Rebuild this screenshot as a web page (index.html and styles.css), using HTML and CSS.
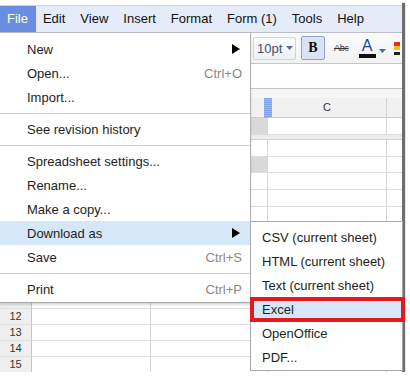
FILE: index.html
```html
<!DOCTYPE html>
<html lang="en">
<head>
    <meta charset="UTF-8">
    <title>Download as Excel</title>
    <link rel="stylesheet" href="styles.css">
</head>
<body>

    <!-- Screenshot frame -->
    <div class="shot">

        <!-- Menu bar -->
        <div class="menubar">
            <span class="menubar-item active">File</span>
            <span class="menubar-item">Edit</span>
            <span class="menubar-item">View</span>
            <span class="menubar-item">Insert</span>
            <span class="menubar-item">Format</span>
            <span class="menubar-item">Form (1)</span>
            <span class="menubar-item">Tools</span>
            <span class="menubar-item">Help</span>
        </div>

        <!-- Toolbar -->
        <div class="toolbar">
            <div class="tool font-size">
                10pt
                <svg width="7" height="4" viewBox="0 0 7 4"><path d="M0 0h7L3.5 4z" fill="#5a6d91"/></svg>
            </div>
            <div class="tool bold">B</div>
            <div class="tool abc">Abc</div>
            <div class="tool text-color">
                <span class="letter">A</span>
                <svg width="7" height="4" viewBox="0 0 7 4"><path d="M0 0h7L3.5 4z" fill="#4a6aa8"/></svg>
            </div>
            <div class="tool fill-color">
                <svg width="6" height="16" viewBox="0 0 6 16">
                    <rect x="0" y="2" width="6" height="4" fill="#e03020"/>
                    <rect x="0" y="6" width="6" height="4" fill="#f0c020"/>
                    <rect x="0" y="12" width="6" height="3" fill="#222"/>
                </svg>
            </div>
        </div>

        <!-- Formula bar -->
        <div class="formula"></div>
        <div class="gap"></div>

        <!-- Sheet grid -->
        <div class="sheet">
            <div class="row head">
                <div class="cell rh"></div>
                <div class="cell col-a"></div>
                <div class="cell col-b"><span class="resize"></span></div>
                <div class="cell col-c">C</div>
                <div class="cell col-d"></div>
            </div>
            <div class="row h17">
                <div class="cell rh">1</div>
                <div class="cell col-a"></div>
                <div class="cell col-b shaded"></div>
                <div class="cell col-c"></div>
                <div class="cell col-d"></div>
            </div>
            <div class="freeze"></div>
            <div class="row h17"><div class="cell rh">2</div><div class="cell col-a"></div><div class="cell col-b"></div><div class="cell col-c"></div><div class="cell col-d"></div></div>
            <div class="row h16"><div class="cell rh">3</div><div class="cell col-a"></div><div class="cell col-b shaded"></div><div class="cell col-c"></div><div class="cell col-d"></div></div>
            <div class="row h17"><div class="cell rh">4</div><div class="cell col-a"></div><div class="cell col-b"></div><div class="cell col-c"></div><div class="cell col-d"></div></div>
            <div class="row h17"><div class="cell rh">5</div><div class="cell col-a"></div><div class="cell col-b"></div><div class="cell col-c"></div><div class="cell col-d"></div></div>
            <div class="row h17"><div class="cell rh">6</div><div class="cell col-a"></div><div class="cell col-b"></div><div class="cell col-c"></div><div class="cell col-d"></div></div>
            <div class="row h17"><div class="cell rh">7</div><div class="cell col-a"></div><div class="cell col-b"></div><div class="cell col-c"></div><div class="cell col-d"></div></div>
            <div class="row h17"><div class="cell rh">8</div><div class="cell col-a"></div><div class="cell col-b"></div><div class="cell col-c"></div><div class="cell col-d"></div></div>
            <div class="row h17"><div class="cell rh">9</div><div class="cell col-a"></div><div class="cell col-b"></div><div class="cell col-c"></div><div class="cell col-d"></div></div>
            <div class="row h17"><div class="cell rh">10</div><div class="cell col-a"></div><div class="cell col-b"></div><div class="cell col-c"></div><div class="cell col-d"></div></div>
            <div class="row h17"><div class="cell rh">11</div><div class="cell col-a"></div><div class="cell col-b"></div><div class="cell col-c"></div><div class="cell col-d"></div></div>
            <div class="row h16"><div class="cell rh">12</div><div class="cell col-a"></div><div class="cell col-b"></div><div class="cell col-c"></div><div class="cell col-d"></div></div>
            <div class="row h16"><div class="cell rh">13</div><div class="cell col-a"></div><div class="cell col-b"></div><div class="cell col-c"></div><div class="cell col-d"></div></div>
            <div class="row h16"><div class="cell rh">14</div><div class="cell col-a"></div><div class="cell col-b"></div><div class="cell col-c"></div><div class="cell col-d"></div></div>
            <div class="row h16 last"><div class="cell rh">15</div><div class="cell col-a"></div><div class="cell col-b"></div><div class="cell col-c"></div><div class="cell col-d"></div></div>
        </div>

        <!-- File menu -->
        <div class="menu file-menu">
            <div class="menu-item">New <svg class="arrow" width="8" height="10" viewBox="0 0 8 10"><path d="M0 0l8 5-8 5z" fill="#000"/></svg></div>
            <div class="menu-item">Open... <span class="shortcut">Ctrl+O</span></div>
            <div class="menu-item">Import...</div>
            <div class="separator"></div>
            <div class="menu-item">See revision history</div>
            <div class="separator"></div>
            <div class="menu-item">Spreadsheet settings...</div>
            <div class="menu-item">Rename...</div>
            <div class="menu-item">Make a copy...</div>
            <div class="menu-item selected">Download as <svg class="arrow" width="8" height="10" viewBox="0 0 8 10"><path d="M0 0l8 5-8 5z" fill="#000"/></svg></div>
            <div class="menu-item">Save <span class="shortcut">Ctrl+S</span></div>
            <div class="separator"></div>
            <div class="menu-item">Print <span class="shortcut">Ctrl+P</span></div>
        </div>

        <!-- Download as submenu -->
        <div class="menu sub-menu">
            <div class="menu-item">CSV (current sheet)</div>
            <div class="menu-item">HTML (current sheet)</div>
            <div class="menu-item">Text (current sheet)</div>
            <div class="menu-item selected excel">Excel</div>
            <div class="menu-item">OpenOffice</div>
            <div class="menu-item">PDF...</div>
        </div>
    </div>

</body>
</html>
```

FILE: styles.css
```css
/* General Styles */
body {
    margin: 0;
    background-color: #ffffff;
    font-family: "Liberation Sans", Arial, sans-serif;
    font-size: 13px;
    color: #222;
}

.shot {
    position: relative;
    width: 402px;
    height: 372px;
    padding-top: 5px;
    box-sizing: border-box;
    background-color: #ffffff;
    box-shadow: 3px 3px 1px #6e6e6e;
}

/* Menu bar */
.menubar {
    display: flex;
    height: 26px;
    background-color: #e5ebf9;
    border-top: 1px solid #c8d5f1;
    border-bottom: 1px solid #b8bcc6;
}

.menubar-item {
    padding: 0 8px 0 7px;
    line-height: 26px;
    color: #111;
}

.menubar-item.active {
    background-color: #6a8edf;
    color: #ffffff;
}

/* Toolbar */
.toolbar {
    display: flex;
    align-items: center;
    height: 30px;
    padding-left: 253px;
    background: linear-gradient(#fbfbfb, #f2f2f2);
    border-bottom: 1px solid #c6c6c6;
}

.tool {
    display: flex;
    align-items: center;
    box-sizing: border-box;
}

.font-size {
    width: 43px;
    height: 23px;
    padding-left: 3px;
    gap: 4px;
    border: 1px solid #cbd4e4;
    border-radius: 2px;
    background: linear-gradient(#fdfdfd, #eef0f4);
    color: #3e4d6e;
    font-size: 13px;
}

.bold {
    width: 24px;
    height: 24px;
    margin-left: 5px;
    justify-content: center;
    border: 1px solid #8ea3c9;
    border-radius: 2px;
    background-color: #dbe3f2;
    font-family: "Liberation Serif", "Times New Roman", serif;
    font-weight: bold;
    font-size: 14px;
    color: #111;
}

.abc {
    margin-left: 9px;
    font-size: 9px;
    letter-spacing: -0.3px;
    text-decoration: line-through;
    color: #333;
}

.text-color {
    margin-left: 10px;
    gap: 3px;
}

.text-color .letter {
    display: block;
    width: 17px;
    padding-bottom: 1px;
    border-bottom: 4px solid #111;
    text-align: center;
    font-size: 16px;
    line-height: 15px;
    color: #23449a;
}

.text-color svg {
    margin-top: 6px;
}

.fill-color {
    margin-left: 8px;
}

/* Formula bar */
.formula {
    height: 24px;
    background-color: #ffffff;
    border-bottom: 1px solid #bcc5d6;
}

.gap {
    height: 9px;
    background-color: #f6f6f6;
}

/* Sheet grid */
.row {
    display: flex;
    height: 17px;
}

.row.h16 {
    height: 16px;
}

.row.head {
    height: 20px;
    background-color: #f1f1f1;
}

.cell {
    position: relative;
    box-sizing: border-box;
    border-right: 1px solid #d6d6d6;
    border-bottom: 1px solid #dedede;
    font-size: 11px;
    color: #333;
}

.row.head .cell {
    border-bottom: 1px solid #cccccc;
    line-height: 19px;
    text-align: center;
}

.rh {
    width: 32px;
    background-color: #efefef;
    border-right-color: #c4c4c4;
    text-align: center;
    line-height: 15px;
}

.col-a { width: 119px; }
.col-b { width: 117px; }
.col-c { width: 119px; }
.col-d { flex: 1; border-right: none; }

.shaded {
    background-color: #dadada;
}

.resize {
    position: absolute;
    top: 0;
    right: -5px;
    width: 8px;
    height: 20px;
    background: repeating-linear-gradient(#7fa3ea 0 1px, #99b8f2 1px 2px);
}

.freeze {
    height: 5px;
    box-sizing: border-box;
    background-color: #ececec;
    border-bottom: 1px solid #d0d0d0;
}

/* Menus */
.menu {
    position: absolute;
    box-sizing: border-box;
    background-color: #ffffff;
}

.file-menu {
    top: 33px;
    left: 0;
    width: 251px;
    padding: 4px 0 1px;
    border-right: 1px solid #b4b4b4;
    border-bottom: 1px solid #a8a8a8;
    box-shadow: 0 2px 2px rgba(0, 0, 0, 0.15);
}

.sub-menu {
    top: 221px;
    left: 250px;
    width: 153px;
    padding: 3px 0 1px;
    border: 1px solid #a9a9a9;
}

.menu-item {
    display: flex;
    justify-content: space-between;
    align-items: center;
    height: 24px;
    padding: 0 8px 0 27px;
    color: #1e1e1e;
}

.sub-menu .menu-item {
    padding-left: 11px;
}

.menu-item.selected {
    background-color: #d5e7f8;
}

.shortcut {
    color: #8a8a8a;
}

.arrow {
    margin-right: 2px;
}

.separator {
    height: 0;
    margin: 4px 0 3px;
    border-top: 1px solid #d4d4d4;
}

/* Highlight box round Excel */
.excel {
    position: relative;
}

.excel::after {
    content: "";
    position: absolute;
    top: 0;
    left: -1px;
    right: -3px;
    bottom: -1px;
    border: 4px solid #e8161f;
}
```
